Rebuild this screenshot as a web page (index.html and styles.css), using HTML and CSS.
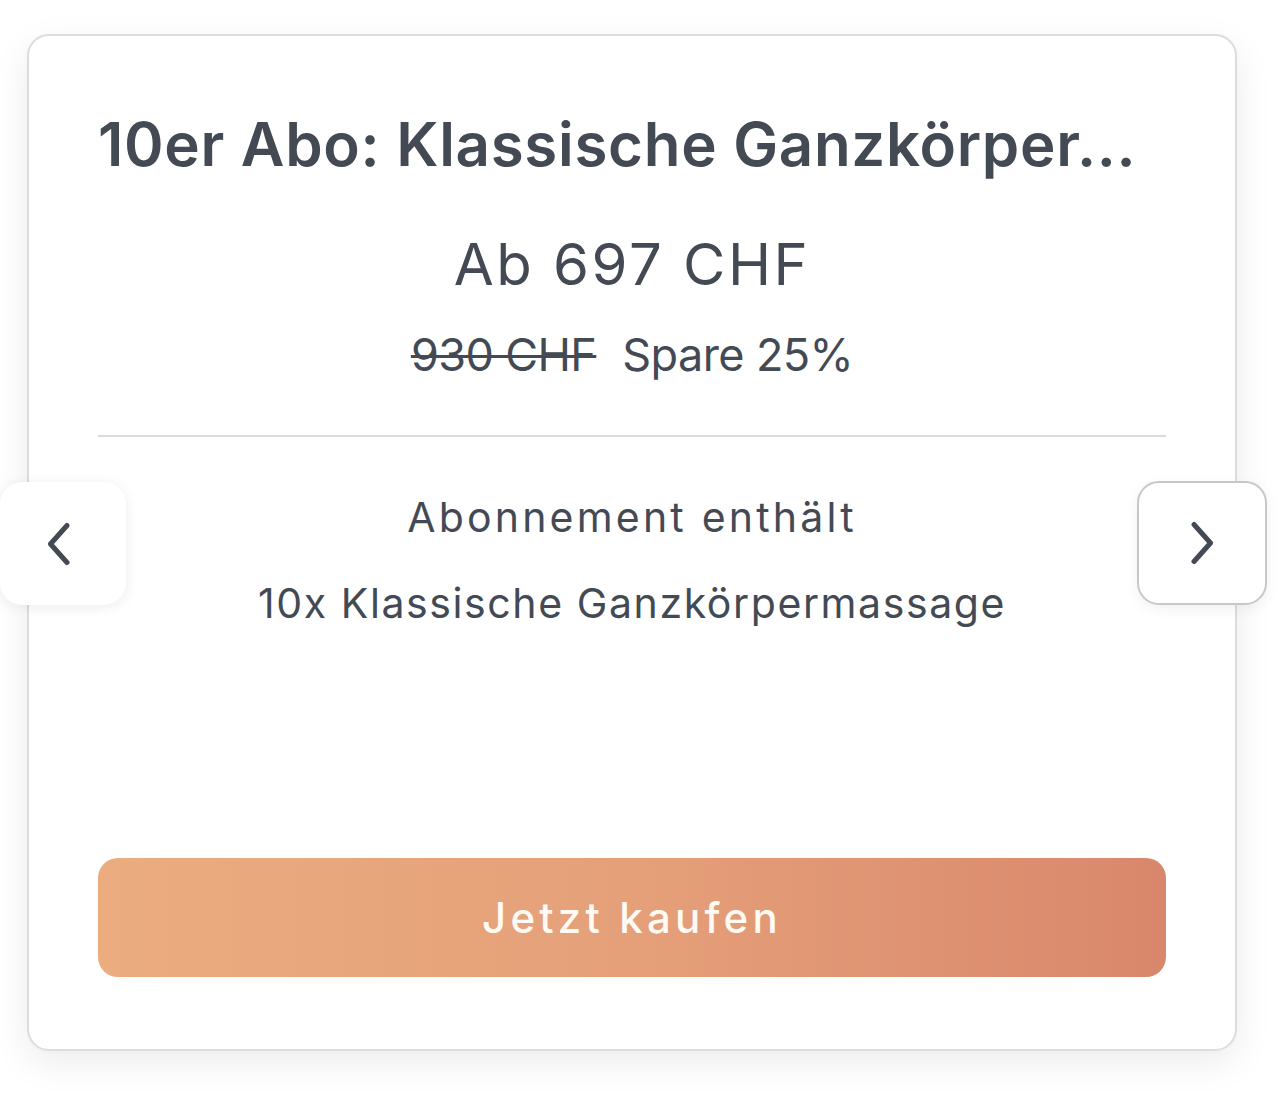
FILE: index.html
```html
<!DOCTYPE html>
<html lang="de">
<head>
<meta charset="utf-8">
<title>10er Abo</title>
<link rel="stylesheet" href="styles.css">
</head>
<body>
  <div class="card">
    <h2 class="title" title="10er Abo: Klassische Ganzkörpermassage">10er Abo: Klassische Ganzkörper...</h2>
    <div class="price">Ab 697 CHF</div>
    <div class="saving"><span class="old">930 CHF</span><span class="spare">Spare 25%</span></div>
    <hr class="divider">
    <div class="contains">Abonnement enthält</div>
    <div class="item">10x Klassische Ganzkörpermassage</div>
    <button class="buy">Jetzt kaufen</button>

    <button class="nav nav-prev" aria-label="Zurück">
      <svg width="26" height="44" viewBox="0 0 26 44"><path d="M21 3.5 L4.5 22 L21 40.5" fill="none" stroke="#434a54" stroke-width="5" stroke-linecap="round" stroke-linejoin="round"/></svg>
    </button>
    <button class="nav nav-next" aria-label="Weiter">
      <svg width="26" height="44" viewBox="0 0 26 44"><path d="M5 3.5 L21.5 22 L5 40.5" fill="none" stroke="#434a54" stroke-width="5" stroke-linecap="round" stroke-linejoin="round"/></svg>
    </button>
  </div>
</body>
</html>
```

FILE: styles.css
```css
html, body {
  margin: 0;
  padding: 0;
  background: #ffffff;
}

body {
  font-family: "Inter", "Noto Sans", sans-serif;
  color: #434a54;
  width: 1282px;
  height: 1094px;
  overflow: hidden;
}

.card {
  position: relative;
  box-sizing: border-box;
  width: 1210px;
  height: 1017px;
  margin: 34px 0 0 27px;
  padding: 72px 69px 72px 69px;
  border: 2px solid #dcdcdc;
  border-radius: 22px;
  background: #ffffff;
  box-shadow: 0 12px 36px rgba(0, 0, 0, 0.08);
  display: flex;
  flex-direction: column;
  align-items: stretch;
}

.title {
  margin: 0;
  font-size: 60px;
  line-height: 72px;
  font-weight: 600;
  white-space: nowrap;
  letter-spacing: 0.7px;
}

.price {
  margin-top: 49px;
  text-align: center;
  font-size: 58px;
  line-height: 70px;
  font-weight: 400;
  letter-spacing: 2.5px;
}

.saving {
  margin-top: 28px;
  text-align: center;
  font-size: 45px;
  line-height: 56px;
  letter-spacing: -0.6px;
}

.old {
  text-decoration: line-through;
  text-decoration-thickness: 3px;
  margin-right: 26px;
}

.divider {
  margin: 52px 0 0 0;
  border: 0;
  height: 2px;
  background: #dcdcdc;
}

.contains {
  margin-top: 55px;
  text-align: center;
  font-size: 41px;
  line-height: 50px;
  letter-spacing: 3.2px;
}

.item {
  margin-top: 36px;
  text-align: center;
  font-size: 41px;
  line-height: 50px;
  letter-spacing: 1.6px;
}

.buy {
  margin-top: auto;
  height: 119px;
  border: 0;
  border-radius: 20px;
  background: linear-gradient(90deg, #ebac7f 0%, #e5a079 50%, #d9876c 100%);
  color: #fffaf4;
  font-family: inherit;
  font-size: 42px;
  font-weight: 500;
  letter-spacing: 4.2px;
  cursor: pointer;
}

.nav {
  position: absolute;
  box-sizing: border-box;
  display: flex;
  align-items: center;
  justify-content: center;
  padding: 0;
  background: #ffffff;
  border-radius: 22px;
  cursor: pointer;
}

.nav-prev {
  left: -29px;
  top: 446px;
  width: 126px;
  height: 123px;
  border: 0;
  box-shadow: 0 2px 14px rgba(0, 0, 0, 0.08);
}

.nav-prev svg {
  margin-right: 8px;
}

.nav-next {
  left: 1108px;
  top: 445px;
  width: 130px;
  height: 124px;
  border: 2px solid #c8c8c8;
  box-shadow: 0 4px 14px rgba(0, 0, 0, 0.06);
}
```
